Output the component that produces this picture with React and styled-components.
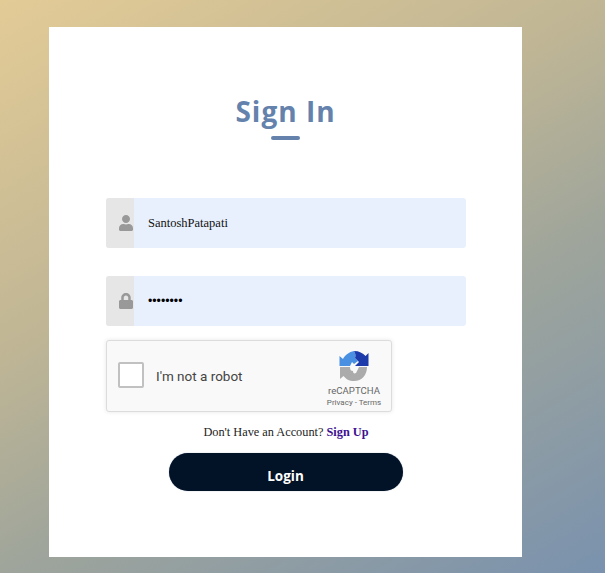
import styled, { createGlobalStyle } from "styled-components";
import { FaUser, FaLock } from "react-icons/fa";

const GlobalStyle = createGlobalStyle`
  html, body {
    margin: 0;
    padding: 0;
    overflow: hidden;
  }
`;

const Page = styled.div`
  box-sizing: border-box;
  width: 605px;
  height: 573px;
  padding: 27px 83px 16px 49px;
  background: linear-gradient(150deg, #e3cb96 0%, #c0b695 38%, #9fa59b 62%, #7a92ae 100%);
`;

const Card = styled.div`
  box-sizing: border-box;
  width: 473px;
  height: 530px;
  background: #fff;
  padding: 64px 57px 0;
  display: flex;
  flex-direction: column;
`;

const Title = styled.h1`
  margin: 0;
  text-align: center;
  font-family: "Open Sans", sans-serif;
  font-size: 28px;
  line-height: 40px;
  font-weight: 700;
  letter-spacing: 1px;
  color: #6482ab;
`;

const Underline = styled.div`
  width: 29px;
  height: 4px;
  border-radius: 2px;
  background: #6482ab;
  margin: 5px auto 58px;
`;

const Field = styled.div`
  display: flex;
  height: 50px;
  width: 360px;
  margin-bottom: ${(p) => p.$gap}px;
  border-radius: 3px;
  overflow: hidden;
  background: #e8f0fe;
`;

const IconBox = styled.div`
  box-sizing: border-box;
  width: 28px;
  flex: none;
  display: flex;
  align-items: center;
  justify-content: flex-end;
  background: #e6e6e6;
  color: #999;
  font-size: 16px;
`;

const Value = styled.div`
  padding-left: 14px;
  display: flex;
  align-items: center;
  font-family: "Liberation Serif", serif;
  font-size: 12.5px;
  color: #111;
`;

const Dots = styled(Value)`
  font-family: "Liberation Sans", sans-serif;
  font-size: 12.3px;
  color: #000;
`;

const Captcha = styled.div`
  box-sizing: border-box;
  width: 286px;
  height: 72px;
  display: flex;
  align-items: center;
  background: #f9f9f9;
  border: 1px solid #dcdcdc;
  border-radius: 3px;
  box-shadow: 0 0 4px rgba(0, 0, 0, 0.1);
  padding: 0 11px;
`;

const Checkbox = styled.div`
  box-sizing: border-box;
  width: 26px;
  height: 26px;
  flex: none;
  margin-bottom: 2px;
  background: #fff;
  border: 2px solid #c1c1c1;
  border-radius: 2px;
`;

const CaptchaLabel = styled.div`
  flex: 1;
  margin-left: 12px;
  font-family: Roboto, sans-serif;
  font-size: 13.5px;
  color: #444;
`;

const Brand = styled.div`
  width: 54px;
  display: flex;
  flex-direction: column;
  align-items: center;
  margin: 7px -1px 0 0;
  font-family: Roboto, sans-serif;
  color: #666;
`;

const BrandName = styled.div`
  font-size: 9.6px;
  line-height: 13px;
  margin-top: 3px;
`;

const BrandLinks = styled.div`
  font-size: 8px;
  line-height: 12px;
  white-space: nowrap;
`;

const Account = styled.div`
  margin-top: 13px;
  padding-left: 1px;
  text-align: center;
  font-family: "Liberation Serif", serif;
  font-size: 12.3px;
  line-height: 15px;
  color: #222;
`;

const SignUp = styled.a`
  font-weight: 700;
  color: #3d0f91;
  text-decoration: none;
`;

const Login = styled.button`
  display: block;
  width: 234px;
  height: 38px;
  margin: 13px auto 0;
  padding: 8px 0 0;
  border: none;
  border-radius: 19px;
  background: #021227;
  box-shadow: 0 0 1px rgba(60, 80, 110, 0.6);
  color: #fff;
  font-family: "Open Sans", sans-serif;
  font-size: 13.5px;
  font-weight: 700;
`;

const RecaptchaLogo = () => (
  <svg width="30" height="30" viewBox="0 0 30 30">
    <path d="M0.5 15 V5 L4 8 C6 4 10 1 15 0 C16.5 2 17 5 16 7 L19 10 L15 13 L13 11 L11 15 Z" fill="#4a90e2" />
    <path d="M15 0 C20 0 24 2 26.5 5 L29.5 2 V15 H16 L20 11 L16 7 C17 5 16.5 2 15 0 Z" fill="#1c3aa9" />
    <path d="M1 16 H11 C11 19 12 20 14 20 C14 22 15 23 17 22 L20 16 H28 C28 24 23 30 15 30 C10 30 7 28 4.5 25 L1 28 Z" fill="#ababab" />
  </svg>
);

export default function App() {
  return (
    <Page>
      <GlobalStyle />
      <Card>
        <Title>Sign In</Title>
        <Underline />
        <Field $gap={28}>
          <IconBox>
            <FaUser />
          </IconBox>
          <Value>SantoshPatapati</Value>
        </Field>
        <Field $gap={14}>
          <IconBox>
            <FaLock />
          </IconBox>
          <Dots>••••••••</Dots>
        </Field>
        <Captcha>
          <Checkbox />
          <CaptchaLabel>I'm not a robot</CaptchaLabel>
          <Brand>
            <RecaptchaLogo />
            <BrandName>reCAPTCHA</BrandName>
            <BrandLinks>Privacy - Terms</BrandLinks>
          </Brand>
        </Captcha>
        <Account>
          Don't Have an Account? <SignUp>Sign Up</SignUp>
        </Account>
        <Login>Login</Login>
      </Card>
    </Page>
  );
}
